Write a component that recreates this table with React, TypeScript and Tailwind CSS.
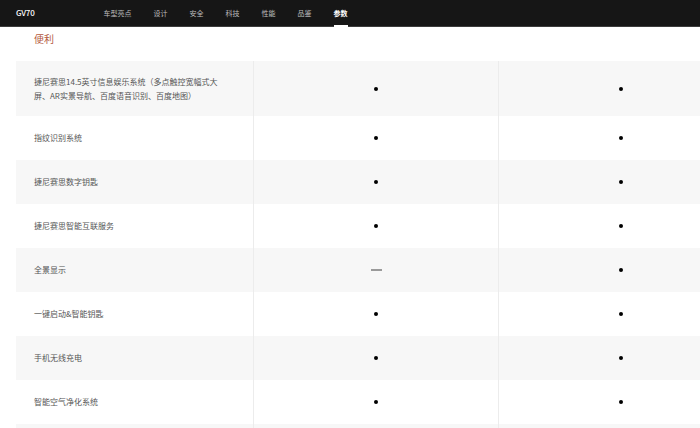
const navItems = ["车型亮点", "设计", "安全", "科技", "性能", "品鉴", "参数"];

type Row = { label: string[]; a: boolean; b: boolean; tall?: boolean };

const rows: Row[] = [
  {
    label: ["捷尼赛思14.5英寸信息娱乐系统（多点触控宽幅式大", "屏、AR实景导航、百度语音识别、百度地图）"],
    a: true,
    b: true,
    tall: true,
  },
  { label: ["指纹识别系统"], a: true, b: true },
  { label: ["捷尼赛思数字钥匙"], a: true, b: true },
  { label: ["捷尼赛思智能互联服务"], a: true, b: true },
  { label: ["全景显示"], a: false, b: true },
  { label: ["一键启动&智能钥匙"], a: true, b: true },
  { label: ["手机无线充电"], a: true, b: true },
  { label: ["智能空气净化系统"], a: true, b: true },
  { label: [""], a: false, b: false },
];

function Mark({ on }: { on: boolean }) {
  if (on) return <span className="block w-[4px] h-[4px] rounded-full bg-black" />;
  return <span className="block w-[11px] h-[2px] bg-[#9a9a9a]" />;
}

export default function App() {
  return (
    <div
      className="w-[700px] h-[428px] overflow-hidden bg-white"
      style={{ fontFamily: '"Noto Sans CJK SC", "Noto Sans", sans-serif' }}
    >
      <header className="h-[27px] bg-[#161616] border-b border-[#3c3c3c] flex items-center px-[16px] relative">
        <span className="text-[8px] font-medium text-white tracking-tight">GV70</span>
        <nav className="ml-[69px] flex gap-[22px] h-full">
          {navItems.map((item, i) => (
            <div key={item} className="relative h-full flex items-center">
              <span className={`text-[7px] ${i === navItems.length - 1 ? "text-white font-bold" : "text-[#bdbdbd]"}`}>
                {item}
              </span>
              {i === navItems.length - 1 && (
                <span className="absolute left-0 right-0 bottom-[-1px] h-[2px] bg-white" />
              )}
            </div>
          ))}
        </nav>
      </header>

      <div className="h-[34px] flex items-center pl-[34px] pb-[11px]">
        <span className="text-[10px] text-[#b4593e]">便利</span>
      </div>

      <div className="pl-[16px]">
        <div className="w-[727px]">
          {rows.map((row, i) => (
            <div
              key={i}
              className={`grid grid-cols-[237px_245px_245px] ${row.tall ? "h-[55px]" : "h-[44px]"} ${
                i % 2 === 0 ? "bg-[#f7f7f7]" : "bg-white"
              }`}
            >
              <div className="flex flex-col justify-center pl-[18px] text-[8px] leading-[14px] text-[#555]">
                {row.label.map((l) => (
                  <span key={l}>{l}</span>
                ))}
              </div>
              <div className="border-l border-[#ececec] flex items-center justify-center">
                {row.label[0] && <Mark on={row.a} />}
              </div>
              <div className="border-l border-[#ececec] flex items-center justify-center">
                {row.label[0] && <Mark on={row.b} />}
              </div>
            </div>
          ))}
        </div>
      </div>
    </div>
  );
}
